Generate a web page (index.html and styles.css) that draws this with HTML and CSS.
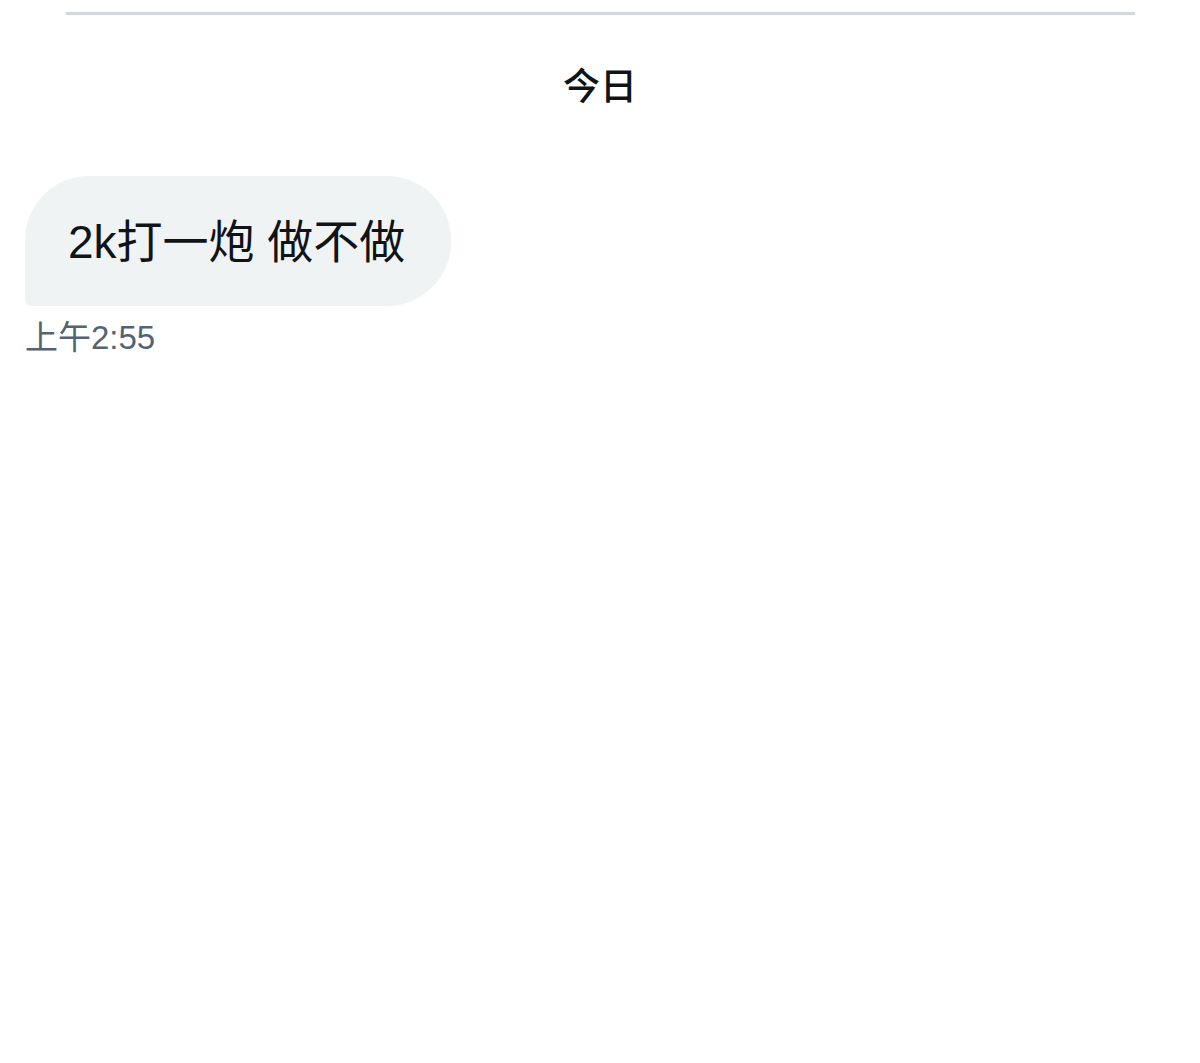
FILE: index.html
```html
<!DOCTYPE html>
<html>
  <head>
    <title>Messages</title>
    <meta charset="utf-8" />
    <meta name="viewport" content="width=device-width, initial-scale=1" />
    <link rel="stylesheet" href="styles.css">
  </head>
  <body>
    <div class="divider"></div>
    <div class="day-label">今日</div>
    <div class="thread">
      <div class="message">
        <div class="bubble">2k打一炮 做不做</div>
        <div class="time">上午2:55</div>
      </div>
    </div>
  </body>
</html>
```

FILE: styles.css
```css
body {
  margin: 0;
  background-color: #fff;
  font-family: "Liberation Sans", "Noto Sans CJK SC", sans-serif;
  color: #0f1419;
}
.divider {
  height: 3px;
  margin: 12px 65px 0 66px;
  background-color: #cfd9de;
}
.day-label {
  margin-top: 47px;
  text-align: center;
  font-size: 37px;
  font-weight: 500;
  line-height: 52px;
}
.thread {
  padding: 62px 25px 0;
}
.message {
  display: flex;
  flex-direction: column;
  align-items: flex-start;
}
.bubble {
  padding: 35px 46px 33px 43px;
  font-size: 46px;
  line-height: 62px;
  background-color: #eff3f4;
  border-radius: 64px 64px 64px 6px;
}
.time {
  margin-top: 12px;
  font-size: 33px;
  line-height: 40px;
  color: #536471;
}
```
